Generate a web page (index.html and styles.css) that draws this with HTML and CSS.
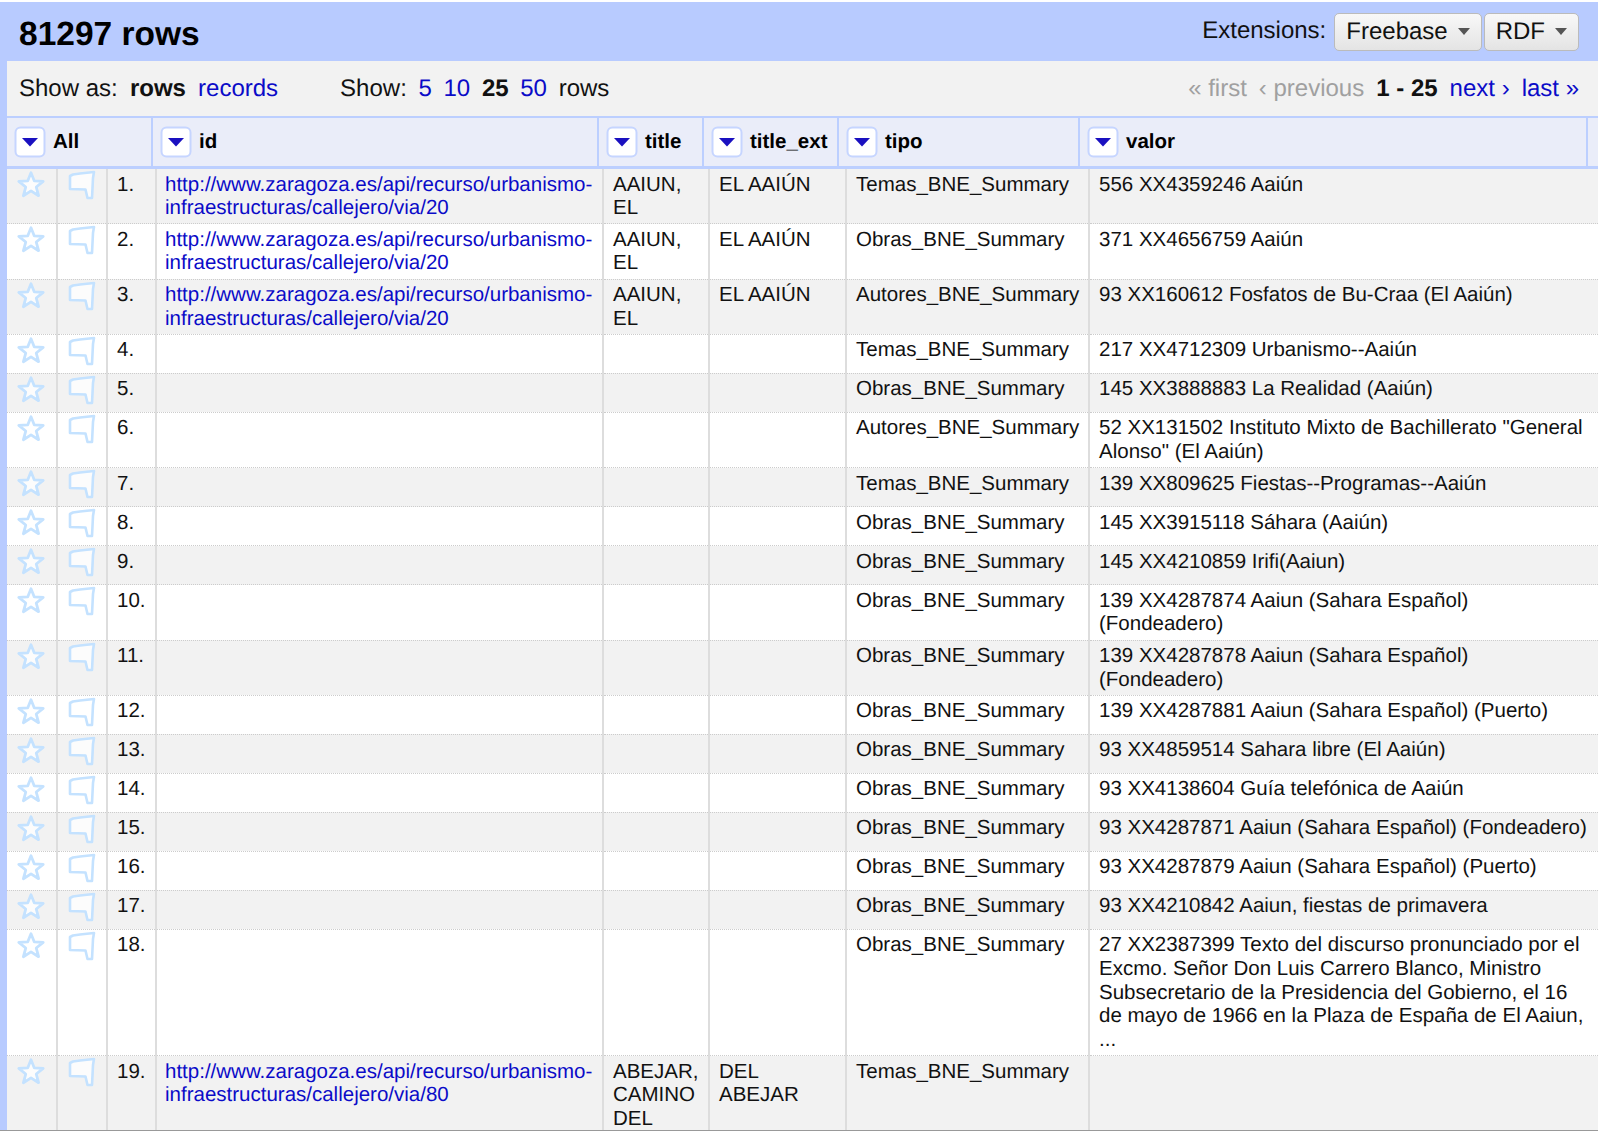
FILE: index.html
```html
<!DOCTYPE html>
<html lang="en">
<head>
<meta charset="utf-8">
<title>81297 rows</title>
<link rel="stylesheet" href="styles.css">
</head>
<body>
<svg class="defs" width="0" height="0" aria-hidden="true">
  <defs>
    <filter id="soft" x="-20%" y="-20%" width="140%" height="140%"><feGaussianBlur stdDeviation="0.7"/></filter>
    <symbol id="star" viewBox="0 0 28 28"><path d="M14 2.500l3 7.600 8.400.5-6.500 5.300 2.200 8.100-7.100-4.500-7.100 4.500 2.200-8.100-6.500-5.300 8.400-.5z" fill="#fff" fill-opacity=".8" stroke="#c4e2ff" stroke-width="2.600" stroke-linejoin="round" filter="url(#soft)"/></symbol>
    <symbol id="flag" viewBox="0 0 30 30"><path d="M3 6l3-1.500 7-1 14-1.500-1 6-1 20h-4.500l-2-8.500-15.500-.5z" fill="#fff" fill-opacity=".8" stroke="#c4e2ff" stroke-width="2.600" stroke-linejoin="round" filter="url(#soft)"/></symbol>
    <symbol id="menu" viewBox="0 0 32 32"><rect x="1.500" y="1.500" width="29" height="29" rx="5" fill="#fff" stroke="#c6d5ff" stroke-width="2"/><path d="M8 12h16l-8 8.500z" fill="#1a10c0"/></symbol>
  </defs>
</svg>
<div class="page">
  <header class="summary">
    <h1 class="count">81297 rows</h1>
    <div class="extensions">
      <span class="ext-label">Extensions:</span>
      <div class="ext-buttons">
        <button class="ext-btn" type="button">Freebase<i class="caret"></i></button>
        <button class="ext-btn" type="button">RDF<i class="caret"></i></button>
      </div>
    </div>
  </header>
  <div class="main">
    <nav class="toolbar">
      <div class="view-opts">
        <span class="group">Show as: <b class="opt">rows</b> <a class="opt" href="#">records</a></span>
        <span class="group group-show">Show: <a class="opt" href="#">5</a> <a class="opt" href="#">10</a> <b class="opt">25</b> <a class="opt" href="#">50</a> <span class="opt">rows</span></span>
      </div>
      <div class="pager">
        <span class="off">« first</span>
        <span class="off">‹ previous</span>
        <b>1 - 25</b>
        <a href="#">next ›</a>
        <a href="#">last »</a>
      </div>
    </nav>
    <div class="col-heads">
      <div class="col-head h-all"><svg class="menu"><use href="#menu"/></svg>All</div>
      <div class="col-head h-id"><svg class="menu"><use href="#menu"/></svg>id</div>
      <div class="col-head h-title"><svg class="menu"><use href="#menu"/></svg>title</div>
      <div class="col-head h-ext"><svg class="menu"><use href="#menu"/></svg>title_ext</div>
      <div class="col-head h-tipo"><svg class="menu"><use href="#menu"/></svg>tipo</div>
      <div class="col-head h-valor"><svg class="menu"><use href="#menu"/></svg>valor</div>
      <div class="col-head h-end"></div>
    </div>
    <table class="rows">
      <colgroup><col class="c-star"><col class="c-flag"><col class="c-num"><col class="c-id"><col class="c-title"><col class="c-ext"><col class="c-tipo"><col class="c-valor"></colgroup>
      <tbody>
        <tr><td class="ico"><svg class="star"><use href="#star"/></svg></td><td class="ico"><svg class="flag"><use href="#flag"/></svg></td><td class="num">1.</td><td class="url"><a href="#">http://www.zaragoza.es/api/recurso/urbanismo-infraestructuras/callejero/via/20</a></td><td>AAIUN, EL</td><td>EL AAIÚN</td><td>Temas_BNE_Summary</td><td>556 XX4359246 Aaiún</td></tr>
        <tr><td class="ico"><svg class="star"><use href="#star"/></svg></td><td class="ico"><svg class="flag"><use href="#flag"/></svg></td><td class="num">2.</td><td class="url"><a href="#">http://www.zaragoza.es/api/recurso/urbanismo-infraestructuras/callejero/via/20</a></td><td>AAIUN, EL</td><td>EL AAIÚN</td><td>Obras_BNE_Summary</td><td>371 XX4656759 Aaiún</td></tr>
        <tr><td class="ico"><svg class="star"><use href="#star"/></svg></td><td class="ico"><svg class="flag"><use href="#flag"/></svg></td><td class="num">3.</td><td class="url"><a href="#">http://www.zaragoza.es/api/recurso/urbanismo-infraestructuras/callejero/via/20</a></td><td>AAIUN, EL</td><td>EL AAIÚN</td><td>Autores_BNE_Summary</td><td>93 XX160612 Fosfatos de Bu-Craa (El Aaiún)</td></tr>
        <tr><td class="ico"><svg class="star"><use href="#star"/></svg></td><td class="ico"><svg class="flag"><use href="#flag"/></svg></td><td class="num">4.</td><td></td><td></td><td></td><td>Temas_BNE_Summary</td><td>217 XX4712309 Urbanismo--Aaiún</td></tr>
        <tr><td class="ico"><svg class="star"><use href="#star"/></svg></td><td class="ico"><svg class="flag"><use href="#flag"/></svg></td><td class="num">5.</td><td></td><td></td><td></td><td>Obras_BNE_Summary</td><td>145 XX3888883 La Realidad (Aaiún)</td></tr>
        <tr><td class="ico"><svg class="star"><use href="#star"/></svg></td><td class="ico"><svg class="flag"><use href="#flag"/></svg></td><td class="num">6.</td><td></td><td></td><td></td><td>Autores_BNE_Summary</td><td>52 XX131502 Instituto Mixto de Bachillerato "General Alonso" (El Aaiún)</td></tr>
        <tr><td class="ico"><svg class="star"><use href="#star"/></svg></td><td class="ico"><svg class="flag"><use href="#flag"/></svg></td><td class="num">7.</td><td></td><td></td><td></td><td>Temas_BNE_Summary</td><td>139 XX809625 Fiestas--Programas--Aaiún</td></tr>
        <tr><td class="ico"><svg class="star"><use href="#star"/></svg></td><td class="ico"><svg class="flag"><use href="#flag"/></svg></td><td class="num">8.</td><td></td><td></td><td></td><td>Obras_BNE_Summary</td><td>145 XX3915118 Sáhara (Aaiún)</td></tr>
        <tr><td class="ico"><svg class="star"><use href="#star"/></svg></td><td class="ico"><svg class="flag"><use href="#flag"/></svg></td><td class="num">9.</td><td></td><td></td><td></td><td>Obras_BNE_Summary</td><td>145 XX4210859 Irifi(Aaiun)</td></tr>
        <tr><td class="ico"><svg class="star"><use href="#star"/></svg></td><td class="ico"><svg class="flag"><use href="#flag"/></svg></td><td class="num">10.</td><td></td><td></td><td></td><td>Obras_BNE_Summary</td><td>139 XX4287874 Aaiun (Sahara Español) (Fondeadero)</td></tr>
        <tr><td class="ico"><svg class="star"><use href="#star"/></svg></td><td class="ico"><svg class="flag"><use href="#flag"/></svg></td><td class="num">11.</td><td></td><td></td><td></td><td>Obras_BNE_Summary</td><td>139 XX4287878 Aaiun (Sahara Español) (Fondeadero)</td></tr>
        <tr><td class="ico"><svg class="star"><use href="#star"/></svg></td><td class="ico"><svg class="flag"><use href="#flag"/></svg></td><td class="num">12.</td><td></td><td></td><td></td><td>Obras_BNE_Summary</td><td>139 XX4287881 Aaiun (Sahara Español) (Puerto)</td></tr>
        <tr><td class="ico"><svg class="star"><use href="#star"/></svg></td><td class="ico"><svg class="flag"><use href="#flag"/></svg></td><td class="num">13.</td><td></td><td></td><td></td><td>Obras_BNE_Summary</td><td>93 XX4859514 Sahara libre (El Aaiún)</td></tr>
        <tr><td class="ico"><svg class="star"><use href="#star"/></svg></td><td class="ico"><svg class="flag"><use href="#flag"/></svg></td><td class="num">14.</td><td></td><td></td><td></td><td>Obras_BNE_Summary</td><td>93 XX4138604 Guía telefónica de Aaiún</td></tr>
        <tr><td class="ico"><svg class="star"><use href="#star"/></svg></td><td class="ico"><svg class="flag"><use href="#flag"/></svg></td><td class="num">15.</td><td></td><td></td><td></td><td>Obras_BNE_Summary</td><td>93 XX4287871 Aaiun (Sahara Español) (Fondeadero)</td></tr>
        <tr><td class="ico"><svg class="star"><use href="#star"/></svg></td><td class="ico"><svg class="flag"><use href="#flag"/></svg></td><td class="num">16.</td><td></td><td></td><td></td><td>Obras_BNE_Summary</td><td>93 XX4287879 Aaiun (Sahara Español) (Puerto)</td></tr>
        <tr><td class="ico"><svg class="star"><use href="#star"/></svg></td><td class="ico"><svg class="flag"><use href="#flag"/></svg></td><td class="num">17.</td><td></td><td></td><td></td><td>Obras_BNE_Summary</td><td>93 XX4210842 Aaiun, fiestas de primavera</td></tr>
        <tr><td class="ico"><svg class="star"><use href="#star"/></svg></td><td class="ico"><svg class="flag"><use href="#flag"/></svg></td><td class="num">18.</td><td></td><td></td><td></td><td>Obras_BNE_Summary</td><td>27 XX2387399 Texto del discurso pronunciado por el Excmo. Señor Don Luis Carrero Blanco, Ministro Subsecretario de la Presidencia del Gobierno, el 16 de mayo de 1966 en la Plaza de España de El Aaiun, ...</td></tr>
        <tr><td class="ico"><svg class="star"><use href="#star"/></svg></td><td class="ico"><svg class="flag"><use href="#flag"/></svg></td><td class="num">19.</td><td class="url"><a href="#">http://www.zaragoza.es/api/recurso/urbanismo-infraestructuras/callejero/via/80</a></td><td>ABEJAR, CAMINO DEL</td><td>DEL ABEJAR</td><td>Temas_BNE_Summary</td><td></td></tr>
      </tbody>
    </table>
  </div>
</div>
</body>
</html>
```

FILE: styles.css
```css
* { box-sizing: border-box; }
html, body { margin: 0; height: 100%; overflow: hidden; background: #fff; }
body { font-family: "Liberation Sans", Arial, sans-serif; color: #111; text-rendering: geometricPrecision; }
a { color: #0b0bc8; text-decoration: none; }
.defs { display: block; height: 0; }

.page { height: 1129px; margin-top: 2px; margin-right: 2px; background: #b8cbff; overflow: hidden; border-bottom: 1px solid #999; }

.summary { height: 59px; display: flex; justify-content: space-between; align-items: center; padding: 0 19px; }
.count { margin: 0; padding-top: 6px; font-size: 33.500px; font-weight: 700; line-height: 50px; color: #000; }
.extensions { display: flex; align-items: center; gap: 8px; font-size: 24px; }
.ext-label { position: relative; top: -1px; }
.ext-buttons { display: flex; gap: 2px; }
.ext-btn { height: 38px; padding: 0 11px; border: 1px solid #bbb; border-radius: 5px; background: linear-gradient(#f8f8f8, #e4e4e4); font: 24px "Liberation Sans", Arial, sans-serif; text-rendering: geometricPrecision; color: #111; display: flex; align-items: center; gap: 10px; }
.caret { width: 0; height: 0; border: 6px solid transparent; border-top: 7px solid #555; border-bottom: 0; }

.main { margin-left: 7px; background: #fff; }

.toolbar { height: 55px; background: #f2f2f2; display: flex; justify-content: space-between; align-items: center; padding: 0 19px 0 12px; font-size: 24px; }
.view-opts { display: flex; gap: 62px; }
.opt { margin-left: 5.500px; }
.group { white-space: pre-wrap; }
.group-show .opt { margin-left: 5px; }
.pager { display: flex; gap: 12px; }
.off { color: #a0a0a0; }

.col-heads { display: flex; height: 53px; background: #eaedf9; border-top: 2px solid #bccfff; border-bottom: 3px solid #bccfff; font-size: 20.500px; font-weight: 700; color: #000; }
.col-head { display: flex; align-items: center; gap: 7px; padding-left: 7px; border-right: 2px solid #bccfff; flex: none; }
.menu { width: 32px; height: 32px; flex: none; }
.h-all { width: 146px; }
.h-id { width: 446px; }
.h-title { width: 105px; }
.h-ext { width: 135px; }
.h-tipo { width: 241px; }
.h-valor { width: 508px; }
.h-end { flex: 1; border-right: 0; }

.rows { width: 1593px; border-collapse: collapse; table-layout: fixed; font-size: 20.500px; line-height: 23.650px; }
.c-star { width: 50px; }
.c-flag { width: 50px; }
.c-num { width: 49px; }
.c-id { width: 447px; }
.c-title { width: 106px; }
.c-ext { width: 137px; }
.c-tipo { width: 243px; }
.rows tr:nth-child(odd) { background: #f2f2f2; }
.rows td { vertical-align: top; padding: 3.500px 9px 3.500px; border-right: 2px solid #ddd; border-bottom: 1px dotted #ccc; height: 39px; }
.rows td:last-child { border-right: 0; }
.rows td.url { padding-left: 8px; }
.rows td.ico { padding: 1px 0 0; }
.rows td.num { padding-left: 9px; padding-right: 0; }
.star { display: block; width: 30px; height: 30px; margin-left: 9px; }
.flag { display: block; width: 30px; height: 30px; margin-left: 9px; }
```
